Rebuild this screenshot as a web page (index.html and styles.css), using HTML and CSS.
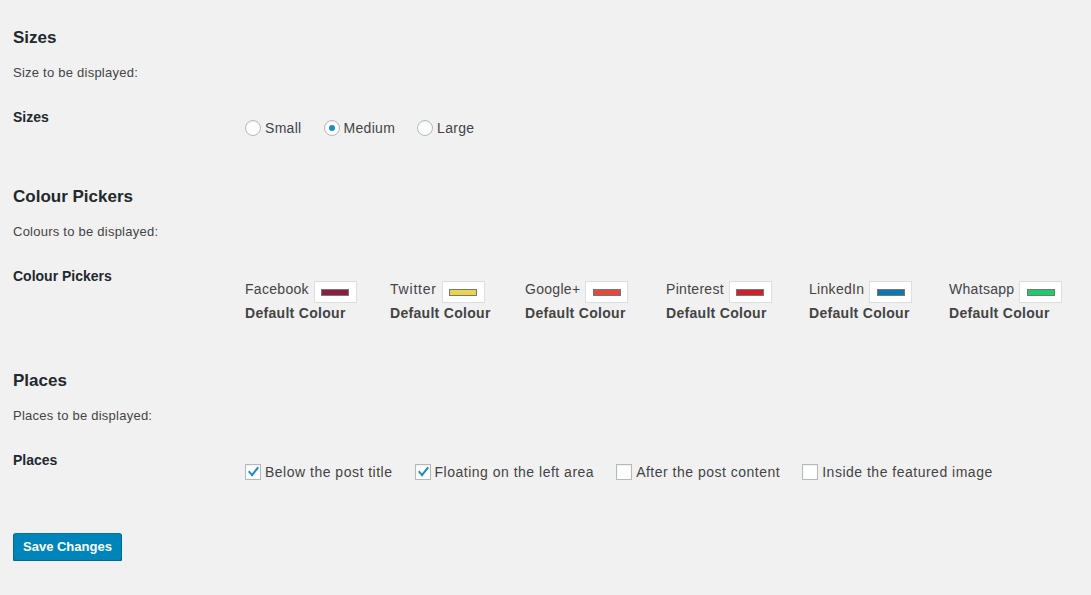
FILE: index.html
```html
<!DOCTYPE html>
<html lang="en">
<head>
<meta charset="utf-8">
<title>Settings</title>
<link rel="stylesheet" href="styles.css">
</head>
<body>
<div class="wrap">
  <section class="section">
    <h2 class="title">Sizes</h2>
    <p class="desc">Size to be displayed:</p>
    <div class="row">
      <div class="row-label">Sizes</div>
      <div class="row-field row-field-tight">
        <div class="choices">
          <label class="choice"><input type="radio" name="size" class="radio"><span>Small</span></label>
          <label class="choice"><input type="radio" name="size" class="radio" checked><span>Medium</span></label>
          <label class="choice"><input type="radio" name="size" class="radio"><span>Large</span></label>
        </div>
      </div>
    </div>
  </section>

  <section class="section">
    <h2 class="title">Colour Pickers</h2>
    <p class="desc">Colours to be displayed:</p>
    <div class="row">
      <div class="row-label">Colour Pickers</div>
      <div class="row-field">
        <div class="pickers">
          <div class="picker">
            <div class="picker-top"><span class="picker-name">Facebook</span><span class="swatch"><span class="swatch-bar bar-facebook"></span></span></div>
            <div class="picker-default">Default Colour</div>
          </div>
          <div class="picker">
            <div class="picker-top"><span class="picker-name picker-name-loose">Twitter</span><span class="swatch"><span class="swatch-bar bar-twitter"></span></span></div>
            <div class="picker-default">Default Colour</div>
          </div>
          <div class="picker">
            <div class="picker-top"><span class="picker-name">Google+</span><span class="swatch"><span class="swatch-bar bar-google"></span></span></div>
            <div class="picker-default">Default Colour</div>
          </div>
          <div class="picker">
            <div class="picker-top"><span class="picker-name">Pinterest</span><span class="swatch"><span class="swatch-bar bar-pinterest"></span></span></div>
            <div class="picker-default">Default Colour</div>
          </div>
          <div class="picker">
            <div class="picker-top"><span class="picker-name">LinkedIn</span><span class="swatch"><span class="swatch-bar bar-linkedin"></span></span></div>
            <div class="picker-default">Default Colour</div>
          </div>
          <div class="picker">
            <div class="picker-top"><span class="picker-name">Whatsapp</span><span class="swatch"><span class="swatch-bar bar-whatsapp"></span></span></div>
            <div class="picker-default">Default Colour</div>
          </div>
        </div>
      </div>
    </div>
  </section>

  <section class="section">
    <h2 class="title">Places</h2>
    <p class="desc">Places to be displayed:</p>
    <div class="row">
      <div class="row-label">Places</div>
      <div class="row-field">
        <div class="choices">
          <label class="choice wide"><input type="checkbox" class="check" checked><span>Below the post title</span></label>
          <label class="choice wide"><input type="checkbox" class="check" checked><span>Floating on the left area</span></label>
          <label class="choice wide"><input type="checkbox" class="check"><span>After the post content</span></label>
          <label class="choice wide"><input type="checkbox" class="check"><span>Inside the featured image</span></label>
        </div>
      </div>
    </div>
  </section>

  <p class="submit"><button type="button" class="button-primary">Save Changes</button></p>
</div>
</body>
</html>
```

FILE: styles.css
```css
html, body {
  margin: 0;
  padding: 0;
}

body {
  background: #f1f1f1;
  color: #444;
  font-family: "Liberation Sans", Arial, sans-serif;
  font-size: 13px;
  line-height: 1.4;
}

.wrap {
  padding: 27px 13px 0;
}

.section {
  margin-bottom: 32px;
}

.title {
  margin: 0;
  font-size: 17px;
  line-height: 22px;
  font-weight: 700;
  color: #23282d;
}

.desc {
  margin: 14px 0 0;
  line-height: 20px;
  letter-spacing: 0.24px;
}

.row {
  display: flex;
  align-items: flex-start;
  margin-top: 6px;
}

.row-label {
  width: 232px;
  flex: none;
  padding-top: 19px;
  padding-bottom: 1px;
  font-size: 14px;
  line-height: 18px;
  font-weight: 700;
  color: #23282d;
}

.row-field {
  padding: 30px 0 15px;
  font-size: 14px;
}

.row-field-tight {
  padding-top: 29px;
  padding-bottom: 16px;
}

.choices {
  display: flex;
  gap: 22px;
}

.choice {
  display: inline-flex;
  align-items: center;
  line-height: 20px;
  letter-spacing: 0.3px;
  color: #444;
  cursor: pointer;
}

.choice.wide {
  letter-spacing: 0.5px;
}

.radio,
.check {
  -webkit-appearance: none;
  appearance: none;
  position: relative;
  width: 16px;
  height: 16px;
  margin: 0 4px 0 0;
  flex: none;
  background: #fff;
  border: 1px solid #b4b9be;
  box-shadow: inset 0 1px 2px rgba(0, 0, 0, 0.07);
  box-sizing: border-box;
}

.radio {
  border-radius: 50%;
}

.radio:checked::before {
  content: "";
  position: absolute;
  left: 4px;
  top: 4px;
  width: 6px;
  height: 6px;
  border-radius: 50%;
  background: #1e8cbe;
}

.check {
  border-radius: 0;
}

.check:checked::before {
  content: "";
  position: absolute;
  left: 2px;
  top: 2px;
  width: 9px;
  height: 4px;
  border-left: 2.5px solid #1e8cbe;
  border-bottom: 2.5px solid #1e8cbe;
  transform: rotate(-52deg) skewX(-10deg);
  transform-origin: center;
}

.pickers {
  display: grid;
  grid-template-columns: 145px 135px 141px 143px 140px auto;
  padding-bottom: 1px;
}

.picker-top {
  display: flex;
  align-items: center;
  height: 24px;
}

.picker-name {
  letter-spacing: 0.3px;
  color: #444;
}

.picker-name-loose {
  letter-spacing: 0.8px;
}

.swatch {
  display: flex;
  align-items: center;
  justify-content: center;
  box-sizing: border-box;
  width: 43px;
  height: 22px;
  margin: 4px 0 0 5px;
  background: #fff;
  border: 1px solid #ddd;
}

.swatch-bar {
  display: block;
  box-sizing: border-box;
  width: 28px;
  height: 7px;
  border: 1px solid #777;
}

.bar-facebook { background: #8d1c43; }
.bar-twitter { background: #e8d54b; }
.bar-google { background: #e2493c; }
.bar-pinterest { background: #d0202e; }
.bar-linkedin { background: #0b76b0; }
.bar-whatsapp { background: #1ecb6a; }

.picker-default {
  margin-top: 2px;
  line-height: 18px;
  font-weight: 700;
  letter-spacing: 0.3px;
  color: #444;
}

.submit {
  margin: 36px 0 0;
  padding: 0;
}

.button-primary {
  box-sizing: border-box;
  height: 28px;
  padding: 0 9px;
  font-family: "Liberation Sans", Arial, sans-serif;
  font-size: 13px;
  font-weight: 700;
  line-height: 26px;
  color: #fff;
  background: #0085ba;
  border: 1px solid #0073aa;
  border-color: #0073aa #006799 #006799;
  border-radius: 3px;
  box-shadow: 0 1px 0 #006799;
  cursor: pointer;
}
```
